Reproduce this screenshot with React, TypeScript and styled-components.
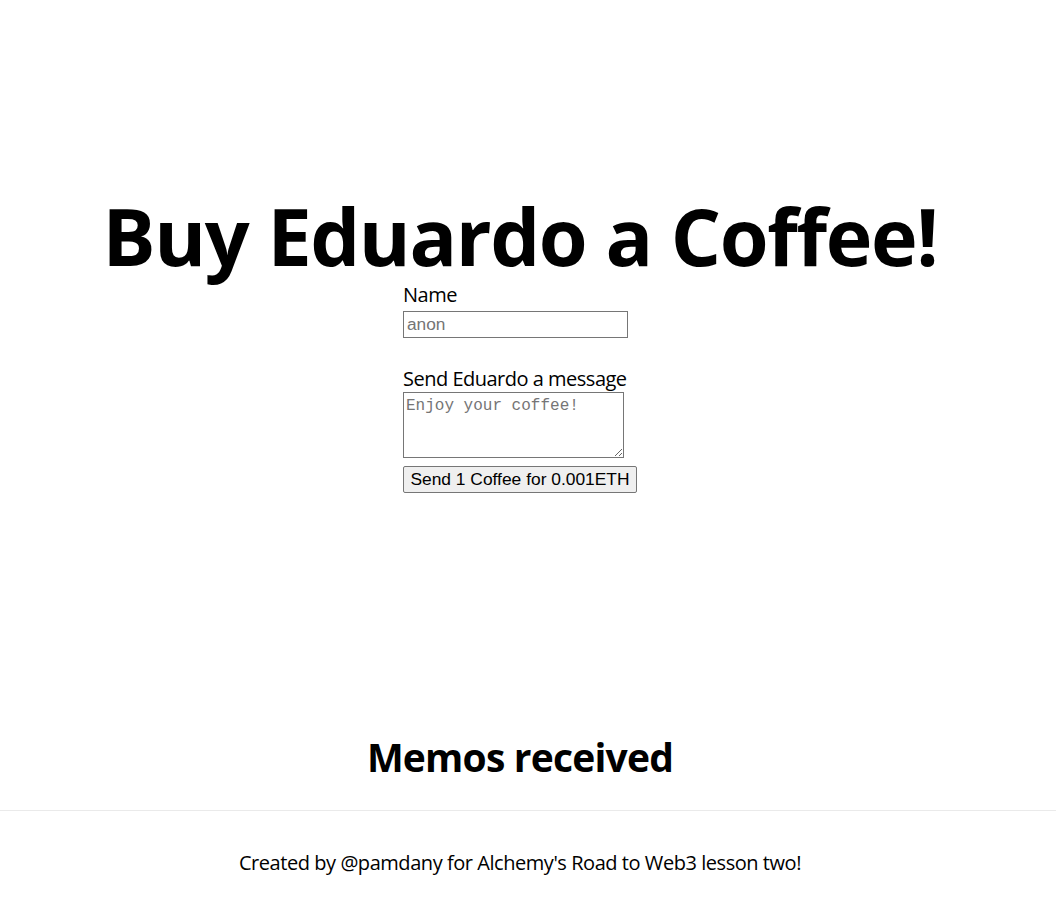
import React from "react";
import styled, { createGlobalStyle } from "styled-components";

const GlobalStyle = createGlobalStyle`
  html, body {
    margin: 0;
    padding: 0;
    background: #ffffff;
    color: #000000;
    font-family: "Open Sans", "Noto Sans", sans-serif;
  }
  * { box-sizing: border-box; }
`;

const Page = styled.div`
  display: flex;
  flex-direction: column;
  min-height: 909px;
`;

const Main = styled.main`
  display: flex;
  flex-direction: column;
  align-items: center;
  padding: 193px 16px 0 0;
  height: 810px;
`;

const Title = styled.h1`
  margin: 0;
  font-size: 79px;
  line-height: 86px;
  letter-spacing: -1.4px;
  font-weight: 700;
  text-align: center;
  white-space: nowrap;
`;

const Form = styled.form`
  display: flex;
  flex-direction: column;
  align-items: flex-start;
  margin-top: 3px;
`;

const Label = styled.label<{ $gap?: number }>`
  display: block;
  font-size: 20px;
  line-height: 26px;
  letter-spacing: -0.5px;
  margin-top: ${(p) => p.$gap ?? 0}px;
`;

const TextInput = styled.input`
  width: 225px;
  height: 27px;
  margin-top: 3px;
  padding: 1px 3px;
  border: 1px solid #767676;
  border-radius: 0;
  font-family: "Liberation Sans", Arial, sans-serif;
  font-size: 17.3px;
  color: #000;
  background: #fff;
  &::placeholder { color: #757575; }
`;

const MessageArea = styled.textarea`
  width: 221px;
  height: 66px;
  margin: 0;
  padding: 4px 2px 2px;
  border: 1px solid #767676;
  border-radius: 0;
  font-family: "Liberation Mono", "DejaVu Sans Mono", monospace;
  font-size: 16px;
  line-height: 19px;
  resize: both;
  &::placeholder { color: #757575; }
`;

const SendButton = styled.button`
  width: 234px;
  height: 27px;
  margin-top: 8px;
  padding: 0 4px;
  border: 1px solid #767676;
  border-radius: 2px;
  background: #efefef;
  color: #000;
  font-family: "Liberation Sans", Arial, sans-serif;
  font-size: 17.4px;
  white-space: nowrap;
`;

const MemosTitle = styled.h1`
  margin: 241px 0 0;
  font-size: 39px;
  line-height: 46px;
  letter-spacing: -0.8px;
  font-weight: 700;
`;

const Footer = styled.footer`
  display: flex;
  justify-content: center;
  align-items: flex-start;
  border-top: 1px solid #eaeaea;
  padding: 38px 16px 0 0;
  flex: 1;
  font-size: 20px;
  line-height: 27px;
  letter-spacing: -0.45px;
`;

export default function App() {
  return (
    <>
      <GlobalStyle />
      <Page>
        <Main>
          <Title>Buy Eduardo a Coffee!</Title>
          <Form onSubmit={(e) => e.preventDefault()}>
            <Label htmlFor="name">Name</Label>
            <TextInput id="name" type="text" placeholder="anon" />
            <Label htmlFor="message" $gap={28}>
              Send Eduardo a message
            </Label>
            <MessageArea id="message" placeholder="Enjoy your coffee!" />
            <SendButton type="button">Send 1 Coffee for 0.001ETH</SendButton>
          </Form>
          <MemosTitle>Memos received</MemosTitle>
        </Main>
        <Footer>Created by @pamdany for Alchemy's Road to Web3 lesson two!</Footer>
      </Page>
    </>
  );
}
